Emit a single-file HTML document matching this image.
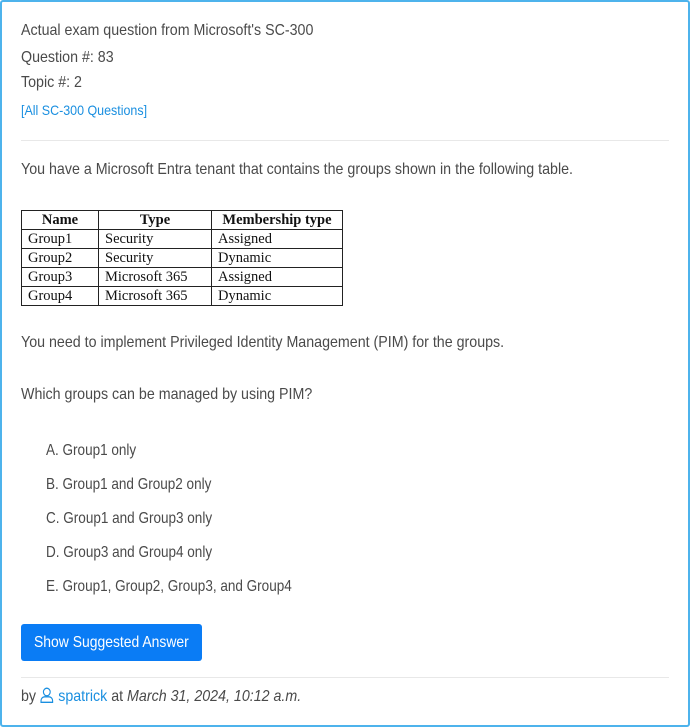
<!DOCTYPE html>
<html><head><style>
html,body{margin:0;padding:0;background:#fff}
body{width:690px;height:727px;overflow:hidden;font-family:"Liberation Sans",sans-serif;color:#4a4a4a;font-size:16px}
.card{position:absolute;left:0;top:0;width:686px;height:723px;border:2px solid #4db3ec;border-radius:3px}
.t{position:absolute;left:21px;white-space:nowrap;transform:scaleX(0.89);transform-origin:0 0}
.o{transform:scaleX(0.845)}
a{color:#1a8fe0;text-decoration:none}
.hr{position:absolute;left:21px;width:648px;height:1px;background:#e8e8e8}
table{position:absolute;left:21px;top:210px;border-collapse:collapse;font-family:"Liberation Serif",serif;font-size:14.5px;color:#111}
td,th{border:1px solid #222;padding:0 6px;height:18px;line-height:17px;text-align:left}
th{text-align:center;font-weight:bold}
.btn{position:absolute;left:21px;top:624px;width:181px;height:37px;background:#0a7cf5;border-radius:3px;color:#fff;line-height:37px;font-size:16px}
.btn span{position:absolute;left:13px;top:0;white-space:nowrap;transform:scaleX(0.87);transform-origin:0 0}
</style></head><body>
<div class="card"></div>
<div class="t" style="top:22px">Actual exam question from Microsoft's SC-300</div>
<div class="t" style="top:49px">Question #: 83</div>
<div class="t" style="top:74px">Topic #: 2</div>
<div class="t" style="top:102px;font-size:14px"><a>[All SC-300 Questions]</a></div>
<div class="hr" style="top:140px"></div>
<div class="t" style="top:161px">You have a Microsoft Entra tenant that contains the groups shown in the following table.</div>
<table>
<tr><th style="width:64px">Name</th><th style="width:100px">Type</th><th style="width:118px">Membership type</th></tr>
<tr><td>Group1</td><td>Security</td><td>Assigned</td></tr>
<tr><td>Group2</td><td>Security</td><td>Dynamic</td></tr>
<tr><td>Group3</td><td>Microsoft 365</td><td>Assigned</td></tr>
<tr><td>Group4</td><td>Microsoft 365</td><td>Dynamic</td></tr>
</table>
<div class="t" style="top:334px">You need to implement Privileged Identity Management (PIM) for the groups.</div>
<div class="t" style="top:386px">Which groups can be managed by using PIM?</div>
<div class="t o" style="left:46px;top:442px">A. Group1 only</div>
<div class="t o" style="left:46px;top:476px">B. Group1 and Group2 only</div>
<div class="t o" style="left:46px;top:510px">C. Group1 and Group3 only</div>
<div class="t o" style="left:46px;top:544px">D. Group3 and Group4 only</div>
<div class="t o" style="left:46px;top:578px">E. Group1, Group2, Group3, and Group4</div>
<div class="btn"><span>Show Suggested Answer</span></div>
<div class="hr" style="top:677px"></div>
<div class="t" style="top:687px">by <svg width="16" height="16" viewBox="0 0 15 16" style="vertical-align:-2px"><circle cx="7.5" cy="5" r="3.8" fill="none" stroke="#1a8fe0" stroke-width="1.3"/><path d="M1 15.3v-1.5a4 4 0 0 1 4-4h5a4 4 0 0 1 4 4v1.5z" fill="none" stroke="#1a8fe0" stroke-width="1.3"/></svg> <a>spatrick</a> at <i>March 31, 2024, 10:12 a.m.</i></div>
</body></html>
